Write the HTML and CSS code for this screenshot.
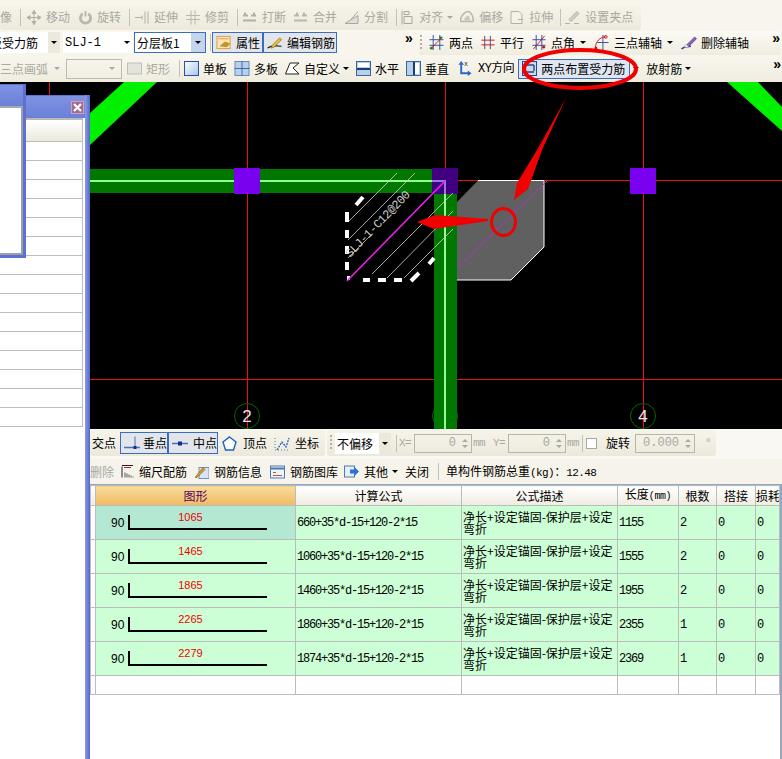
FILE: index.html
```html
<!DOCTYPE html>
<html lang="zh">
<head>
<meta charset="utf-8">
<title>钢筋编辑</title>
<link rel="stylesheet" href="styles.css">
</head>
<body>
<div class="page">
  <header class="toolbars">
    <div class="row row1">
      <div class="bar bar-edit dim">
        <span class="label first">像</span><i class="sep"></i>
        <span class="tool wide-gap"><svg class="ic w14" viewBox="0 0 14 14"><path d="M7 0v14M0 7h14M7 0 5 3h4zM7 14l-2-3h4zM0 7l3-2v4zM14 7l-3-2v4z" fill="#c0c0b8" stroke="#b0b0a8"/></svg><span>移动</span></span>
        <span class="tool"><svg class="ic w13" viewBox="0 0 14 14"><path d="M4 3a5.500 5.500 0 1 0 6 0" fill="none" stroke="#b8b8b0" stroke-width="3"/><path d="M7 0v6" stroke="#b8b8b0" stroke-width="2"/></svg><span>旋转</span></span>
        <i class="sep sep-s"></i>
        <span class="tool"><svg class="ic w14" viewBox="0 0 14 14"><path d="M0 7h7M10 1v12M13 1v12M7 5v4" fill="none" stroke="#b0b0a8"/></svg><span>延伸</span></span>
        <span class="tool"><svg class="ic w14" viewBox="0 0 14 14"><path d="M0 5h14M0 9h14M5 0v14M9 0v14" fill="none" stroke="#b8b8b0"/></svg><span>修剪</span></span>
        <i class="sep sep-xs"></i>
        <span class="tool tight"><svg class="ic w15" viewBox="0 0 15 14"><path d="M1 5h5M9 5h5M1 10h13M3 2v3M12 2v3" fill="none" stroke="#b0b0a8" stroke-width="2"/></svg><span>打断</span></span>
        <span class="tool tight"><svg class="ic w15" viewBox="0 0 15 14"><path d="M1 10h13M1 5h5M9 5h5M4 2v3M11 2v3" fill="none" stroke="#b8b8b0" stroke-width="2"/></svg><span>合并</span></span>
        <span class="tool"><svg class="ic w15" viewBox="0 0 15 14"><path d="M1 13h13V5L1 13zM14 1 7 9" fill="#deded6" stroke="#a8a8a0"/></svg><span>分割</span></span>
        <i class="sep sep-xs"></i>
        <span class="tool tight"><svg class="ic w13" viewBox="0 0 13 14"><path d="M1 0v14M3 6h8v7H3zM3 1h5v3H3z" fill="none" stroke="#a8a8a0"/></svg><span>对齐</span><i class="arr off"></i></span>
        <span class="tool tight"><svg class="ic w14" viewBox="0 0 14 14"><path d="M1 11C-1 7 5 1 8 1s6 6 5 10z" fill="none" stroke="#b8b8b0" stroke-width="1.500"/><path d="M4 10c0-2 3-5 4-5s2 3 2 5z" fill="#c8c8c0"/></svg><span>偏移</span></span>
        <span class="tool tight"><svg class="ic w14" viewBox="0 0 14 14"><path d="M1 1h8l3 3v9H1zM8 9h5" fill="#f2f2ea" stroke="#b0b0a8"/></svg><span>拉伸</span></span>
        <i class="sep sep-xs"></i>
        <span class="tool"><svg class="ic w15" viewBox="0 0 15 14"><path d="M4 9 12 1l2 2-8 8zM0 13h5M9 13h5" fill="#d0d0c8" stroke="#b0b0a8"/></svg><span>设置夹点</span></span>
      </div>
    </div>

    <div class="row row2">
      <div class="combo combo-type"><span class="combo-text cut">板受力筋</span><b class="combo-btn"><i class="arr"></i></b></div>
      <div class="combo combo-name"><span class="combo-text mono">SLJ-1</span><b class="combo-btn white"><i class="arr"></i></b></div>
      <div class="combo combo-layer"><span class="combo-text">分层板1</span><b class="combo-btn blue"><i class="arr"></i></b></div>
      <i class="sep sep-row2"></i>
      <span class="btn btn-prop"><svg class="ic w16" viewBox="0 0 16 16"><rect x=".5" y="1.500" width="14" height="13" fill="#fbe6c0" stroke="#e09a40"/><path d="M2 4h11" stroke="#e09a40"/><path d="M3 12 9 7l6 2-4 4z" fill="#c09a20"/></svg><span>属性</span></span>
      <span class="btn btn-edit"><svg class="ic w16" viewBox="0 0 16 16"><path d="M0 14c4-3 8-3 15-2" fill="none" stroke="#222" stroke-width="1.200"/><path d="m5 11 8-8 2 2-8 8-3 1z" fill="#e8c040" stroke="#806010" stroke-width=".7"/></svg><span>编辑钢筋</span></span>
      <span class="more more-mid">»</span>
      <div class="bar bar-axis">
        <i class="grip"></i>
        <span class="tool"><svg class="ic w15" viewBox="0 0 15 16"><path d="M4 0v16M11 0v16M0 5h15M0 11h15" stroke="#3050a0" fill="none"/><path d="M1 15 14 2" stroke="#d01010"/><circle cx="2" cy="14" r="1.500" fill="#208020"/><circle cx="12" cy="3" r="1.500" fill="#208020"/></svg><span>两点</span></span>
        <span class="tool"><svg class="ic w14" viewBox="0 0 14 16"><path d="M3.500 1v14M9.500 1v14" stroke="#3050a0" fill="none"/><path d="M0 5.500h14M0 10.500h14" stroke="#d01010"/></svg><span>平行</span></span>
        <span class="tool"><svg class="ic w14" viewBox="0 0 14 16"><path d="M4 0v16M10 0v16M0 5h14M0 11h14" stroke="#3050a0" fill="none"/><path d="M1 15 13 1" stroke="#d01010"/><circle cx="12" cy="13" r="1.500" fill="#d01010"/></svg><span>点角</span><i class="arr wide"></i></span>
        <span class="tool"><svg class="ic w15" viewBox="0 0 15 16"><path d="M9 0v16M3 8h12" stroke="#3050a0" fill="none"/><path d="M1 14C1 7 6 2 12 2" fill="none" stroke="#d01010"/><circle cx="12" cy="2" r="1.500" fill="none" stroke="#d01010"/><circle cx="1.500" cy="14" r="1.500" fill="#d01010"/></svg><span>三点辅轴</span><i class="arr wide"></i></span>
        <span class="tool tool-del"><svg class="ic w17" viewBox="0 0 17 16"><path d="M0 15c3-3 6-3 10-3" fill="none" stroke="#2040a0" stroke-width="1.500"/><path d="m5 11 9-9 2 2-9 9z" fill="#9060c0" stroke="#403060" stroke-width=".6"/><path d="m3 13 2-3 3 3z" fill="#fff" stroke="#888" stroke-width=".5"/></svg><span>删除辅轴</span></span>
        <span class="more more-end">»</span>
      </div>
    </div>

    <div class="row row3">
      <span class="label dim first3">三点画弧</span><i class="arr off arc-arr"></i>
      <span class="combo-off"><i class="arr off"></i></span>
      <span class="tool dim"><svg class="ic w15" viewBox="0 0 15 14"><rect x=".5" y="1.500" width="14" height="11" fill="#e4e4dc" stroke="#c0c0b8"/></svg><span>矩形</span></span>
      <i class="sep"></i>
      <span class="tool"><svg class="ic w15" viewBox="0 0 15 15"><defs><linearGradient id="g1" x2="1" y2="1"><stop offset="0" stop-color="#fff"/><stop offset="1" stop-color="#a8c4ec"/></linearGradient></defs><rect x=".5" y=".5" width="14" height="14" fill="url(#g1)" stroke="#2a52a0"/></svg><span>单板</span></span>
      <span class="tool"><svg class="ic w16" viewBox="0 0 16 16"><rect x=".5" y=".5" width="15" height="15" fill="#b8d0ec" stroke="#6088b8"/><path d="M8 0v16M0 8h16" stroke="#3a66a0"/></svg><span>多板</span></span>
      <span class="tool"><svg class="ic w15" viewBox="0 0 15 15"><path d="M.5 13 5 2h9L8 7l6 6z" fill="#fff" stroke="#222"/></svg><span>自定义</span><i class="arr"></i></span>
      <span class="tool"><svg class="ic w15" viewBox="0 0 15 15"><rect x=".5" y=".5" width="14" height="14" fill="#b8cfe8" stroke="#3a66a0"/><path d="M1 8h13" stroke="#1a3a80" stroke-width="2"/><rect x="2" y="2" width="11" height="4" fill="#fff"/></svg><span>水平</span></span>
      <span class="tool"><svg class="ic w15" viewBox="0 0 15 15"><rect x=".5" y=".5" width="14" height="14" fill="#b8cfe8" stroke="#3a66a0"/><path d="M8 1v13" stroke="#1a3a80" stroke-width="2"/><rect x="9" y="2" width="4" height="11" fill="#fff"/></svg><span>垂直</span></span>
      <span class="tool tool-xy"><svg class="ic w17" viewBox="0 0 17 16"><path d="M5 3v10h9" fill="none" stroke="#2868c8" stroke-width="2"/><path d="M5 0 2 4h6zM16 13l-4-3v6z" fill="#2868c8"/><text x="8" y="5" class="ic-txt">x</text></svg><span class="mono-s">XY方向</span></span>
      <span class="btn btn-two"><svg class="ic w15" viewBox="0 0 15 15"><rect x=".5" y=".5" width="14" height="14" fill="#cfd8ea" stroke="#224a90"/><path d="M3 4h9M12 4v6M3 11h9" fill="none" stroke="#224a90" stroke-width="1.400"/><circle cx="3" cy="11" r="1.500" fill="#c02020"/></svg><span>两点布置受力筋</span></span>
      <i class="arr after-two"></i>
      <span class="tool tool-rad"><span>放射筋</span><i class="arr"></i></span>
      <span class="more more-end">»</span>
    </div>
  </header>

  <section class="canvas">
    <svg class="drawing" viewBox="0 82 782 347" width="782" height="347" role="img" aria-label="板受力筋布置图">
      <rect x="0" y="82" width="782" height="347" fill="#000"/>
      <g stroke="#e81010" stroke-width="1" fill="none">
        <path d="M49.500 82v347M247.500 82v347M445.500 82v347M643.500 82v347M0 180.500h782M0 379.500h782"/>
      </g>
      <polygon points="124,82 157,82 90,145 90,113" fill="#00f000"/>
      <polygon points="727,82 758,82 782,107 782,131" fill="#00f000"/>

      <polygon points="478,180.500 544,180.500 544,247 511,280 457,280 457,202" fill="#606060"/>
      <path d="M478 180.500h66V247l-33 33h-54" fill="none" stroke="#fff"/>
      <path d="M457 268 547 181" stroke="#b030c8" fill="none"/>

      <rect x="90" y="169" width="344" height="24" fill="#007800"/>
      <rect x="434" y="193" width="23" height="236" fill="#007800"/>
      <path d="M90 181h355v248" fill="none" stroke="#90ff90" stroke-width="2"/>

      <rect x="234" y="168" width="26" height="26" fill="#7a00f0"/>
      <rect x="630" y="168" width="26" height="26" fill="#7a00f0"/>
      <rect x="432" y="168" width="26" height="26" fill="#400080"/>
      <path d="M432 181h13v13" fill="none" stroke="#9878d8" stroke-width="2"/>

      <g stroke="#d0d0d0" stroke-width="1" fill="none" opacity=".8">
        <path d="M348 222 397 173M348 240 415 173M372 274 453 193M387 278 453 211M404 278 453 229M348 258 372 234"/>
      </g>
      <g fill="none" stroke="#fff" stroke-width="4">
        <path d="M347 212v10M347 230v8M347 246v8M347 262v8M347 278h3M363 280h7M378 280h8M394 280h8M411 281l8-8M429 264l5-6M356 205l7-8"/>
      </g>
      <path d="M347 281 445 181" stroke="#f020f0" stroke-width="1.500" fill="none"/>
      <text class="rebar-label" transform="translate(350 258) rotate(-46)">SLJ-1-C12@200</text>

      <g fill="none" stroke="#006800">
        <circle cx="247" cy="416" r="12.500"/>
        <circle cx="445" cy="416" r="12.500"/>
        <circle cx="643" cy="416" r="12.500"/>
      </g>
      <rect x="434" y="402" width="23" height="27" fill="#007800"/>
      <path d="M445 402v27" stroke="#90ff90" stroke-width="2"/>
      <text class="axis-no" x="247" y="422">2</text>
      <text class="axis-no" x="643" y="422">4</text>
    </svg>
  </section>

  <section class="lower">
    <div class="row row4">
      <div class="bar bar-snap">
        <span class="label">交点</span>
        <span class="btn btn-snap snap-first"><svg class="ic w16" viewBox="0 0 16 14"><path d="M0 11h16" stroke="#5070b0" stroke-width="1.500"/><path d="M11 0v12" stroke="#5070b0"/><rect x="9.500" y="9.500" width="3" height="3" fill="#103090"/></svg><span>垂点</span></span><span class="btn btn-snap"><svg class="ic w16" viewBox="0 0 16 14"><path d="M0 7h16" stroke="#5070b0" stroke-width="1.500"/><rect x="6" y="5" width="4" height="4" fill="#103090"/></svg><span>中点</span></span>
        <span class="tool tool-top"><svg class="ic w15" viewBox="0 0 15 15"><path d="M7.500 1 14 6l-2.500 8h-8L1 6z" fill="#fff" stroke="#2060c0" stroke-width="1.400"/></svg><span>顶点</span></span>
        <span class="tool"><svg class="ic w16" viewBox="0 0 16 15"><path d="M3 14 8 6l4 5 3-9" fill="none" stroke="#2060c0" stroke-dasharray="2 1" stroke-width="1.300"/><path d="M1 2v12h14" fill="none" stroke="#409060" stroke-dasharray="1 2"/></svg><span>坐标</span></span>
      </div>
      <div class="bar bar-offset">
        <i class="grip"></i>
        <div class="combo combo-offset"><span class="combo-text">不偏移</span><b class="combo-btn"><i class="arr"></i></b></div>
        <i class="sep"></i>
        <span class="coord">X=</span>
        <span class="spin"><span>0</span><b class="spin-arrows"><i class="up"></i><i class="down"></i></b></span>
        <span class="coord unit">mm</span>
        <span class="coord coord-y">Y=</span>
        <span class="spin"><span>0</span><b class="spin-arrows"><i class="up"></i><i class="down"></i></b></span>
        <span class="coord unit">mm</span>
        <i class="sep"></i>
        <i class="check"></i>
        <span class="label rotate">旋转</span>
        <span class="spin spin-rot"><span>0.000</span><b class="spin-arrows"><i class="up"></i><i class="down"></i></b></span>
        <span class="coord deg">°</span>
      </div>
    </div>

    <div class="row row5">
      <span class="label dim del">删除</span>
      <span class="tool"><svg class="ic w13" viewBox="0 0 13 14"><path d="M1 2v11M1 1h11" stroke="#222" fill="none"/><path d="M4 13V8M6 13V9M8 13v-3M10 13v-2M12 13v-1" stroke="#555"/><path d="M3 3h7" stroke="#c02020"/></svg><span>缩尺配筋</span></span>
      <span class="tool"><svg class="ic w14" viewBox="0 0 14 14"><rect x="4" y="3" width="10" height="11" fill="#d8e4f4" stroke="#7090c0"/><path d="m0 13 8-10 2 2-8 8z" fill="#d8a030" stroke="#705010" stroke-width=".6"/></svg><span>钢筋信息</span></span>
      <span class="tool tool-lib"><svg class="ic w15" viewBox="0 0 15 14"><rect x=".5" y="1.500" width="14" height="12" fill="#eef2fa" stroke="#5078b0"/><path d="M1 4h13" stroke="#5078b0" stroke-width="2"/><path d="M3 8h3M3 11h9" stroke="#b06030"/></svg><span>钢筋图库</span></span>
      <span class="tool"><svg class="ic w15" viewBox="0 0 15 14"><rect x=".5" y="1.500" width="10" height="11" fill="#e8eef8" stroke="#5078b0"/><path d="M6 5h4V2l5 5-5 5V9H6z" fill="#3070d0"/></svg><span>其他</span><i class="arr"></i></span>
      <span class="label close">关闭</span>
      <i class="sep sep-close"></i>
      <span class="total">单构件钢筋总重<span class="mono-t">(kg)</span>：<span class="mono-t">12.48</span></span>
    </div>

    <div class="grid-wrap">
      <table class="grid">
        <colgroup><col class="c-idx"><col class="c-shape"><col class="c-formula"><col class="c-desc"><col class="c-len"><col class="c-num"><col class="c-lap"><col class="c-loss"></colgroup>
        <thead>
          <tr>
            <th></th><th class="th-on">图形</th><th>计算公式</th><th>公式描述</th><th>长度<span class="unit-h">(mm)</span></th><th>根数</th><th>搭接</th><th class="th-clip">损耗</th>
          </tr>
        </thead>
        <tbody>
          <tr class="on">
            <td class="idx"></td>
            <td class="shape on-cell"><div class="rebar"><span class="hook">90</span><span class="bent"><em>1065</em></span></div></td>
            <td class="num">660+35*d-15+120-2*15</td>
            <td class="desc">净长+设定锚固-保护层+设定<br>弯折</td><td class="num">1155</td><td class="num">2</td><td class="num">0</td><td class="num">0</td>
          </tr>
          <tr>
            <td class="idx"></td>
            <td class="shape"><div class="rebar"><span class="hook">90</span><span class="bent"><em>1465</em></span></div></td>
            <td class="num">1060+35*d-15+120-2*15</td>
            <td class="desc">净长+设定锚固-保护层+设定<br>弯折</td><td class="num">1555</td><td class="num">2</td><td class="num">0</td><td class="num">0</td>
          </tr>
          <tr>
            <td class="idx"></td>
            <td class="shape"><div class="rebar"><span class="hook">90</span><span class="bent"><em>1865</em></span></div></td>
            <td class="num">1460+35*d-15+120-2*15</td>
            <td class="desc">净长+设定锚固-保护层+设定<br>弯折</td><td class="num">1955</td><td class="num">2</td><td class="num">0</td><td class="num">0</td>
          </tr>
          <tr>
            <td class="idx"></td>
            <td class="shape"><div class="rebar"><span class="hook">90</span><span class="bent"><em>2265</em></span></div></td>
            <td class="num">1860+35*d-15+120-2*15</td>
            <td class="desc">净长+设定锚固-保护层+设定<br>弯折</td><td class="num">2355</td><td class="num">1</td><td class="num">0</td><td class="num">0</td>
          </tr>
          <tr>
            <td class="idx"></td>
            <td class="shape"><div class="rebar"><span class="hook">90</span><span class="bent"><em>2279</em></span></div></td>
            <td class="num">1874+35*d-15+120-2*15</td>
            <td class="desc">净长+设定锚固-保护层+设定<br>弯折</td><td class="num">2369</td><td class="num">1</td><td class="num">0</td><td class="num">0</td>
          </tr>
          <tr class="empty"><td></td><td></td><td></td><td></td><td></td><td></td><td></td><td></td></tr>
        </tbody>
      </table>
    </div>
  </section>

  <aside class="win win-back">
    <div class="win-title"><span class="win-close"><svg viewBox="0 0 9 9" width="9" height="9"><path d="M1 1l7 7M8 1 1 8" stroke="#fff" stroke-width="2.200"/></svg></span></div>
    <div class="win-body">
      <div class="list-head"></div>
      <div class="list-row"></div><div class="list-row"></div><div class="list-row"></div><div class="list-row"></div><div class="list-row"></div><div class="list-row"></div><div class="list-row"></div><div class="list-row"></div><div class="list-row"></div><div class="list-row"></div><div class="list-row"></div><div class="list-row"></div><div class="list-row"></div><div class="list-row"></div><div class="list-row"></div>
    </div>
  </aside>
  <aside class="win win-front">
    <div class="win-title"></div>
    <div class="win-body"></div>
  </aside>

  <svg class="notes" viewBox="0 0 782 759" width="782" height="759" aria-hidden="true">
    <ellipse cx="580" cy="69" rx="56" ry="19" fill="none" stroke="#f00000" stroke-width="4"/>
    <polygon points="566,98 542,150 528,189 514,200 517,183 537,150" fill="#f00000"/>
    <polygon points="417,222 435,215 488,219 488,221 434,229" fill="#f00000"/>
    <ellipse cx="503.500" cy="222" rx="12" ry="13.500" fill="none" stroke="#f00000" stroke-width="3"/>
  </svg>
</div>
</body>
</html>
```

FILE: styles.css
```css
* { box-sizing: border-box; }
html, body { margin: 0; padding: 0; background: #fff; }
body { font-family: "Noto Sans CJK SC", "Liberation Sans", sans-serif; font-size: 12px; color: #000; }
i, b, em { font-style: normal; font-weight: normal; }

.page { position: relative; width: 782px; height: 759px; overflow: hidden; }

/* toolbars */
.toolbars { background: #f7f5ec; height: 82px; }
.row { display: flex; align-items: center; white-space: nowrap; }
.row1 { height: 31px; padding-top: 4px; padding-bottom: 1px; }
.row2 { height: 25px; padding-bottom: 2px; }
.row3 { height: 26px; padding-bottom: 1px; background: linear-gradient(#f8f6ee, #efecdf); }
.bar { display: flex; align-items: center; height: 100%; border-radius: 3px; background: linear-gradient(#f6f4ea, #ece9dc); }
.bar-edit { width: 641px; height: 25px; }
.bar-axis { flex: none; width: 362px; height: 24px; margin-left: 2px; padding-left: 1px; background: linear-gradient(#fbfaf5, #efecdf); }
.dim { color: #a9a9a1; }

.tool { display: inline-flex; align-items: center; gap: 5px; margin-right: 8px; line-height: 16px; }
.tool.wide-gap { margin-right: 9px; }
.tool.tight { margin-right: 7px; }
.ic { display: block; flex: none; height: 15px; }
.w13 { width: 13px; }
.w14 { width: 14px; }
.w15 { width: 15px; }
.w16 { width: 16px; }
.w17 { width: 17px; }
.ic-txt { font: 7px "Liberation Mono", monospace; fill: #222; }

.label { line-height: 16px; }
.first { margin-right: 8px; }
.sep { flex: none; display: block; width: 1px; height: 17px; background: #c4c2b6; margin-right: 6px; }
.sep.sep-s { margin-right: 5px; }
.sep.sep-xs { margin-right: 4px; }
.grip { flex: none; display: block; width: 2px; height: 16px; margin-right: 7px; background: repeating-linear-gradient(#b0b0a8 0 2px, transparent 2px 4px); }

.arr { display: inline-block; flex: none; width: 0; height: 0; border: 3px solid transparent; border-top: 3px solid #000; border-bottom: 0; margin-left: -1px; }
.arr.off { border-top-color: #a9a9a1; }
.arr.wide { margin-left: 0; }

.combo { display: flex; align-items: center; height: 21px; background: #fff; }
.combo-text { flex: 1; padding-left: 2px; overflow: hidden; }
.combo-text.cut { padding-left: 0; text-indent: -8px; }
.combo-btn { display: flex; align-items: center; justify-content: center; flex: none; width: 12px; height: 100%; background: #ece9dc; }
.combo-btn.white { background: #fff; }
.combo-btn.blue { width: 14px; background: #c4d4ec; }
.combo-type { width: 62px; margin-left: -2px; margin-right: 3px; }
.combo-name { width: 70px; margin-right: 1px; }
.combo-layer { width: 72px; border: 1px solid #3a6cc0; }
.mono { font-family: "Liberation Mono", monospace; font-size: 12px; }
.sep-row2 { margin-left: 4px; margin-right: 1px; }

.btn { display: inline-flex; align-items: center; gap: 4px; border: 1px solid #3a6cc0; background: #e2e5ea; height: 21px; line-height: 16px; }
.btn-prop { width: 51px; padding-left: 3px; }
.btn-edit { width: 74px; padding-left: 3px; margin-left: 0; }
.btn-two { width: 112px; height: 20px; padding-left: 3px; gap: 4px; background: #dfe6f2; }

.more { font-family: "Liberation Sans", sans-serif; font-size: 14px; font-weight: bold; line-height: 14px; }
.more-mid { margin-left: 68px; margin-top: -10px; width: 12px; }
.more-end { margin-left: auto; margin-right: 1px; margin-top: -9px; }
.tool-del { gap: 3px; margin-left: 0; margin-right: 0; }

.first3 { margin-right: 7px; }
.arc-arr { margin-right: 6px; }
.combo-off { display: flex; align-items: center; justify-content: flex-end; width: 56px; height: 20px; border: 1px solid #bdbbb0; padding-right: 6px; margin-right: 5px; }
.row3 .tool { gap: 4px; margin-right: 7px; }
.row3 .sep { margin-left: 2px; margin-right: 4px; }
.row3 .tool.tool-xy { gap: 5px; margin-right: 4px; }
.mono-s { font-family: "Liberation Mono", "Noto Sans CJK SC", monospace; font-size: 12px; letter-spacing: -.6px; }
.after-two { margin-left: 3px; margin-right: 7px; }
.row3 .tool.tool-rad { margin-right: 0; }

/* canvas */
.canvas { height: 347px; background: #000; }
.drawing { display: block; }
.rebar-label { font: 12px "Liberation Mono", monospace; fill: #cfcfcf; letter-spacing: -.5px; }
.axis-no { font: 17px "Liberation Sans", sans-serif; fill: #e8e8e8; text-anchor: middle; }

/* lower panel */
.lower { margin-left: 90px; background: #fff; }
.row4 { height: 30px; padding: 1px 0 3px; gap: 2px; background: #f9f8f2; }
.bar-snap { flex: none; width: 235px; padding-left: 2px; }
.bar-snap .label { margin-right: 4px; }
.btn-snap { width: 51px; height: 22px; padding-left: 3px; gap: 5px; background: #e2e5ea; }
.btn-snap.snap-first { gap: 3px; }
.tool-top { margin-left: 4px; margin-right: 7px; gap: 6px; }
.bar-offset { flex: none; width: 389px; padding-left: 3px; }
.bar-offset .grip { margin-right: 3px; }
.combo-offset { width: 56px; margin-right: 5px; }
.bar-offset .sep { margin-right: 2px; }
.coord { font: 11px "Liberation Mono", monospace; color: #a9a9a1; letter-spacing: -.6px; }
.coord.unit { margin-left: 1px; }
.coord-y { margin-left: 8px; margin-right: 1px; }
.bar-offset .coord:not(.unit):not(.deg) { margin-right: 3px; }
.spin { display: flex; align-items: center; justify-content: flex-end; gap: 6px; width: 58px; height: 19px; border: 1px solid #b8b6aa; color: #a9a9a1; padding-right: 3px; font-family: "Liberation Mono", monospace; }
.spin-rot { width: 60px; }
.spin-arrows { display: flex; flex-direction: column; gap: 3px; }
.up { display: block; width: 0; height: 0; border: 3px solid transparent; border-top: 0; border-bottom: 3px solid #a9a9a1; }
.down { display: block; width: 0; height: 0; border: 3px solid transparent; border-bottom: 0; border-top: 3px solid #a9a9a1; }
.bar-offset .unit + .sep { margin-left: 3px; margin-right: 3px; }
.check { display: block; flex: none; width: 11px; height: 11px; border: 1px solid #a8a8a0; background: #fff; margin-right: 9px; }
.rotate { margin-right: 5px; }
.deg { margin-left: 10px; }

.row5 { height: 25px; padding-right: 2px; background: #f6f4ea; }
.row5 .tool { gap: 5px; margin-right: 8px; }
.row5 .tool.tool-lib { margin-right: 6px; }
.del { margin-right: 7px; }
.close { margin-left: -1px; }
.sep-close { margin-left: 9px; margin-right: 7px; }
.total { line-height: 16px; }
.mono-t { font-family: "Liberation Mono", monospace; font-size: 11px; letter-spacing: -.6px; }

/* table */
.grid-wrap { height: 275px; border-top: 1px solid #8fa8c8; border-right: 2px solid #8fa8c8; background: #fff; }
.grid { border-collapse: collapse; table-layout: fixed; width: 689px; }
.c-idx { width: 5px; }
.c-shape { width: 200px; }
.c-formula { width: 166px; }
.c-desc { width: 156px; }
.c-len { width: 61px; }
.c-num { width: 38px; }
.c-lap { width: 39px; }
.c-loss { width: 24px; }
.grid th, .grid td { border: 1px solid #bcbcbc; padding: 0; overflow: hidden; white-space: nowrap; }
.grid th { height: 19px; font-weight: normal; background: linear-gradient(#fff, #efecdf); line-height: 16px; }
.grid th.th-on { background: linear-gradient(#f9dc9c, #f0bb62); color: #55006a; }
.th-clip { text-align: left; padding-left: 2px; }
.unit-h { font-family: "Liberation Mono", monospace; font-size: 10px; letter-spacing: -.4px; }
.grid td { height: 34px; background: #ccffd5; }
.grid td.idx { background: #fff; }
.grid td.on-cell { background: #b5e8d2; }
.grid .empty td { height: 19px; background: #fff; }
.num { font: 12px "Liberation Mono", monospace; letter-spacing: -1.2px; padding-left: 1px !important; }
.desc { font-size: 12px; line-height: 12px; padding-left: 1px !important; }

.rebar { display: flex; align-items: flex-end; height: 33px; padding: 0 0 9px 15px; }
.hook { font: 12px "Liberation Sans", sans-serif; width: 17px; line-height: 12px; margin-bottom: 1px; }
.bent { position: relative; display: block; width: 139px; height: 15px; border-left: 2px solid #000; border-bottom: 2px solid #000; text-align: center; }
.bent em { display: block; margin-top: -4px; color: #f00000; font: 11px "Liberation Sans", sans-serif; line-height: 13px; padding-right: 16px; }

/* floating windows over the canvas */
.win { position: absolute; left: 0; background: #fff; }
.win-back { top: 95px; width: 90px; height: 664px; }
.win-back::after { content: ""; position: absolute; top: 0; right: 0; bottom: 0; width: 5px; background: linear-gradient(90deg, #8a9ae4, #5468cc); }
.win-title { height: 23px; background: linear-gradient(#8092e2, #6a80d8); border-top: 1px solid #6070d0; position: relative; }
.win-close { position: absolute; top: 5px; right: 6px; display: flex; align-items: center; justify-content: center; width: 13px; height: 13px; border: 1px solid #c4a4c0; background: #a86a8c; z-index: 1; }
.win-body { border-top: 2px solid #b8b8b8; width: 83px; border-right: 1px solid #bcbcbc; }
.list-head { height: 22px; background: linear-gradient(#fff, #ece9dc); border-bottom: 1px solid #bcbcbc; }
.list-row { height: 19px; border-bottom: 1px solid #bcbcbc; }
.win-front { top: 84px; width: 26px; height: 174px; border-right: 3px solid #5e70d0; border-bottom: 3px solid #5e70d0; z-index: 2; }
.win-front .win-title { height: 22px; }
.win-front .win-body { height: 149px; width: 23px; border-top: 2px solid #a8a8a8; border-right: 2px solid #9aa0a8; border-bottom: 2px solid #9aa0a8; background: #fff; }

/* hand-drawn red marks on top of the screenshot */
.notes { position: absolute; left: 0; top: 0; z-index: 3; pointer-events: none; }
```
